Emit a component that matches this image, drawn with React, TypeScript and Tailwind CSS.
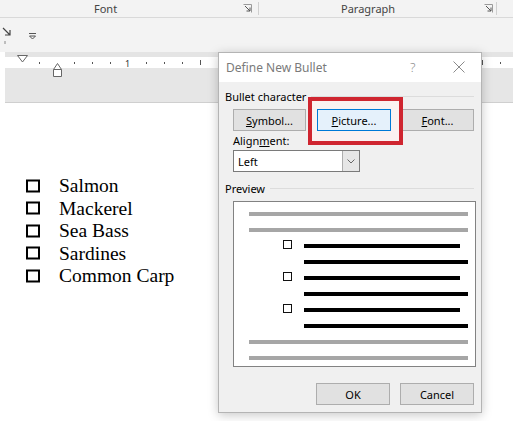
import React from "react";

const ui = { fontFamily: '"Noto Sans", "Liberation Sans", sans-serif' };
const serif = { fontFamily: '"Liberation Serif", "Times New Roman", serif' };

function Launcher() {
  return (
    <svg width="9" height="9" viewBox="0 0 9 9" className="shrink-0">
      <path d="M0.5 0.5 H8.5 M8.5 0.5 V8.5" stroke="#9a9a9a" strokeWidth="1" fill="none" />
      <path d="M2 2 L7 7 M7 3.5 V7 H3.5" stroke="#555" strokeWidth="1" fill="none" />
    </svg>
  );
}

function Button({ children, active }: { children: React.ReactNode; active?: boolean }) {
  return (
    <div
      className={`h-[22px] flex items-center justify-center border text-[11px] text-black leading-none ${
        active ? "bg-[#e5f1fb] border-[#0078d7] relative z-10" : "bg-[#e1e1e1] border-[#adadad]"
      }`}
    >
      {children}
    </div>
  );
}

function SectionLabel({ text }: { text: string }) {
  return (
    <div className="h-[14px] flex items-center text-[11px] text-black leading-none">
      <span>{text}</span>
      <div className="flex-1 h-px bg-[#dcdcdc] ml-[5px]" />
    </div>
  );
}

function GrayLine() {
  return <div className="h-[4px] w-[219px] bg-[#a6a6a6]" />;
}

function BulletItem() {
  return (
    <>
      <div className="h-[4px] flex items-center">
        <div className="w-[34px] shrink-0" />
        <div className="w-[9px] h-[9px] border border-[#111] bg-white shrink-0 -translate-y-[2px]" />
        <div className="w-[12px] shrink-0" />
        <div className="h-[4px] w-[156px] bg-black" />
      </div>
      <div className="h-[4px] flex">
        <div className="w-[55px] shrink-0" />
        <div className="h-[4px] w-[164px] bg-black" />
      </div>
    </>
  );
}

export default function App() {
  const fish = ["Salmon", "Mackerel", "Sea Bass", "Sardines", "Common Carp"];

  return (
    <div className="w-[522px] h-[421px] bg-white relative overflow-hidden" style={ui}>
      <div className="w-[513px]">
        {/* ribbon group labels */}
        <div className="h-[18px] bg-[#f3f3f3] border-b border-[#d9d9d9] flex text-[11px] text-[#444] leading-none">
          <div className="w-[259px] flex items-center pl-[94px] pr-[6px] border-r border-[#d0d0d0] my-[2px]">
            <span>Font</span>
            <div className="ml-auto">
              <Launcher />
            </div>
          </div>
          <div className="w-[238px] flex items-center pl-[82px] pr-[3px] border-r border-[#d0d0d0] my-[2px]">
            <span>Paragraph</span>
            <div className="ml-auto">
              <Launcher />
            </div>
          </div>
        </div>

        {/* toolbar strip */}
        <div className="h-[34px] bg-[#f3f3f3] relative">
          <svg width="40" height="34" viewBox="0 0 40 34" className="block">
            <path d="M3 10 L10 17 M10 12 V17 H5" stroke="#444" strokeWidth="1.2" fill="none" />
            <path d="M29 15.5 H36" stroke="#555" strokeWidth="1" />
            <path d="M29.5 18 H35.5 L32.5 21 Z" stroke="#555" strokeWidth="1" fill="none" />
            <path d="M5 23 V26" stroke="#888" strokeWidth="1" />
          </svg>
        </div>

        {/* ruler */}
        <div className="ml-[5px] h-[16px] relative">
          <svg width="508" height="16" viewBox="0 0 508 16" className="block">
            <rect x="0" y="0" width="508" height="5" fill="#e4e4e4" />
            <rect x="0" y="5" width="508" height="11" fill="#ffffff" />
            {[34, 69, 87, 105, 141, 159, 177, 495].map((x) => (
              <rect key={x} x={x} y="10" width="1" height="2" fill="#555" />
            ))}
            {[195, 477].map((x) => (
              <rect key={x} x={x} y="8" width="1" height="5" fill="#555" />
            ))}
          </svg>
          <span className="absolute left-[120px] top-[7px] text-[9px] leading-[9px] text-[#333]">1</span>
          <svg width="70" height="26" viewBox="0 0 70 26" className="absolute -left-[5px] top-0 overflow-visible">
            <path d="M17.5 3.5 H27.5 L22.5 10 Z" fill="#fff" stroke="#666" strokeWidth="1" />
            <path d="M53.5 17.5 L57.5 11.5 L61.5 17.5 V24.5 H53.5 Z" fill="#fff" stroke="#666" strokeWidth="1" />
            <path d="M53.5 17.5 H61.5" stroke="#666" strokeWidth="1" />
          </svg>
        </div>

        {/* gray band under the ruler */}
        <div className="ml-[5px] h-[35px] bg-[#e6e6e6] border-b border-[#cfcfcf]" />
      </div>

      {/* document */}
      <div className="pt-[72px] pl-[26px] text-[19.5px] text-black leading-[22.5px]" style={serif}>
        {fish.map((f) => (
          <div key={f} className="h-[22.5px] flex items-center">
            <div className="w-[14px] h-[13px] border-2 border-black shrink-0 -translate-y-[0.5px]" />
            <span className="ml-[19px]">{f}</span>
          </div>
        ))}
      </div>

      {/* Define New Bullet dialog */}
      <div className="absolute left-[218px] top-[52px] w-[264px] h-[361px] border border-[#b4b4b4] bg-[#f0f0f0] shadow-[0_2px_10px_rgba(0,0,0,0.22)] flex flex-col">
        <div className="h-[29px] bg-white flex items-center pl-[7px] text-[12px] text-[#7a7a7a] leading-none relative">
          <span>Define New Bullet</span>
          <span className="absolute left-[191px] top-[8px] text-[13px] text-[#8a8a8a] font-light">?</span>
          <svg width="12" height="12" viewBox="0 0 12 12" className="absolute left-[234px] top-[8px]">
            <path d="M0.5 0.5 L11.5 11.5 M11.5 0.5 L0.5 11.5" stroke="#8a8a8a" strokeWidth="1" />
          </svg>
        </div>

        <div className="flex-1 flex flex-col pl-[6px] pr-[7px] relative">
          <div className="mt-[7px]">
            <SectionLabel text="Bullet character" />
          </div>

          {/* red highlight */}
          <div className="absolute left-[89px] top-[15px] w-[95px] h-[48px] border-[4.5px] border-[#cf2530] bg-[#fbf1f1]" />

          <div className="mt-[6px] ml-[8px] flex">
            <div className="w-[73px]">
              <Button>
                <span>
                  <span className="underline">S</span>ymbol...
                </span>
              </Button>
            </div>
            <div className="w-[74px] ml-[11px] relative z-10">
              <Button active>
                <span>
                  <span className="underline">P</span>icture...
                </span>
              </Button>
            </div>
            <div className="w-[73px] ml-[10px]">
              <Button>
                <span>
                  <span className="underline">F</span>ont...
                </span>
              </Button>
            </div>
          </div>

          <div className="mt-[2px] ml-[8px] h-[14px] flex items-center text-[11px] text-black leading-none">
            <span>
              Align<span className="underline">m</span>ent:
            </span>
          </div>

          <div className="mt-[3px] ml-[8px] w-[127px] h-[22px] bg-white border border-[#7a7a7a] flex text-[11px] text-black leading-none">
            <div className="flex-1 flex items-center pl-[4px]">Left</div>
            <div className="w-[17px] bg-[#e6e6e6] border-l border-[#adadad] flex items-center justify-center">
              <svg width="8" height="5" viewBox="0 0 8 5">
                <path d="M0.5 0.5 L4 4 L7.5 0.5" stroke="#666" strokeWidth="1" fill="none" />
              </svg>
            </div>
          </div>

          <div className="mt-[9px]">
            <SectionLabel text="Preview" />
          </div>

          <div className="mt-[6px] ml-[8px] w-[243px] h-[166px] bg-white border border-[#828282] pt-[10px] pl-[15px] flex flex-col gap-[12px]">
            <GrayLine />
            <GrayLine />
            <BulletItem />
            <BulletItem />
            <BulletItem />
            <GrayLine />
            <GrayLine />
          </div>

          <div className="mt-[16px] flex justify-end">
            <div className="w-[74px]">
              <Button>OK</Button>
            </div>
            <div className="w-[74px] ml-[10px]">
              <Button>Cancel</Button>
            </div>
          </div>
        </div>
      </div>
    </div>
  );
}
